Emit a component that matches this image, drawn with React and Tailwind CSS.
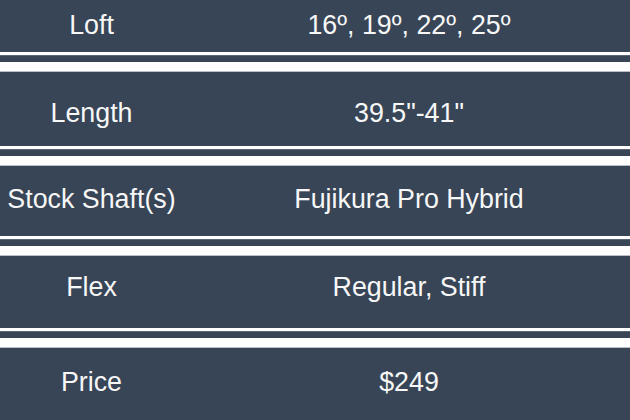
const specs = [
  { label: 'Loft', value: '16º, 19º, 22º, 25º', h: 'h-[52px]', pt: 'pt-[12px]' },
  { label: 'Length', value: '39.5"-41"', h: 'h-[74px]', pt: 'pt-[28px]' },
  { label: 'Stock Shaft(s)', value: 'Fujikura Pro Hybrid', h: 'h-[70px]', pt: 'pt-[20px]' },
  { label: 'Flex', value: 'Regular, Stiff', h: 'h-[72px]', pt: 'pt-[18px]' },
  { label: 'Price', value: '$249', h: 'h-[72px]', pt: 'pt-[21px]' },
];

function Divider() {
  return (
    <div className="flex flex-col">
      <div className="h-[3px] bg-white" />
      <div className="h-[7px] bg-[#374556] border-t border-[#5a6675]" />
      <div className="h-[9px] bg-white" />
      <div className="h-[1px] bg-[#b8bec6]" />
    </div>
  );
}

export default function App() {
  return (
    <div className="w-[630px] h-[420px] overflow-hidden bg-[#374556] font-['Liberation_Sans',Arial,sans-serif] text-[26.8px] leading-none text-[#f7f7f7]">
      {specs.map((row, i) => (
        <div key={row.label}>
          {i > 0 && <Divider />}
          <div className={`grid grid-cols-[183px_1fr] bg-[#374556] ${row.h} ${row.pt}`}>
            <div className="text-center whitespace-nowrap">{row.label}</div>
            <div className="text-center whitespace-nowrap pl-[5px]">{row.value}</div>
          </div>
        </div>
      ))}
    </div>
  );
}
